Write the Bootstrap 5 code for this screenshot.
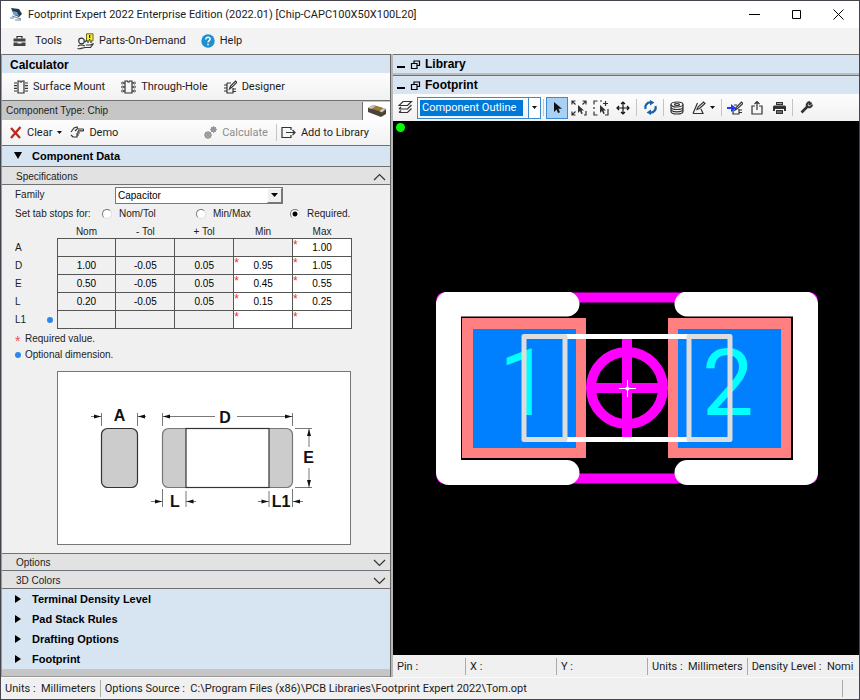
<!DOCTYPE html>
<html lang="en">
<head>
<meta charset="utf-8">
<meta name="viewport" content="width=device-width, initial-scale=1">
<title>Footprint Expert 2022 Enterprise Edition</title>
<link href="https://cdn.jsdelivr.net/npm/bootstrap@5.3.0/dist/css/bootstrap.min.css" rel="stylesheet">
<style>
  :root { --ui: Roboto, "Open Sans", sans-serif; --form: "Liberation Sans", Arial, sans-serif; --line: #707070; --head: #d7e4f2; }
  body { font-family: var(--ui); font-size: 11px; line-height: 16px; color: #1c1c1c; background: #f0f0f0; }
  svg { display: block; flex: none; fill: none; stroke: #333; stroke-width: 1.2; }
  .app { border: 1px solid #45454d; min-height: 100vh; }
  .titlebar { height: 27px; background: #fff; padding-left: 8px; }
  .titlebar h1 { font-size: 11px; line-height: 16px; font-weight: 400; }
  .btn { --bs-btn-padding-x: 0; --bs-btn-padding-y: 0; --bs-btn-font-size: 11px; --bs-btn-line-height: 16px; --bs-btn-border-radius: 0; --bs-btn-border-width: 0; --bs-btn-color: #1c1c1c; --bs-btn-disabled-color: #8c8c8c; --bs-btn-disabled-opacity: 1; display: inline-flex; align-items: center; gap: 5px; font-family: inherit; white-space: nowrap; }
  .win-btn { width: 42px; height: 26px; justify-content: center; }
  .menubar { height: 26px; background: #f3f3f3; padding-left: 12px; gap: 15px; }
  .pane-left { flex: 0 0 390px; min-width: 0; border-right: 1px solid #666; background: #f0f0f0; border-left: 1px solid #999; }
  .pane-right { border-left: 2px solid #b8b8b8; min-width: 0; }
  .pane-title { font-family: var(--form); font-weight: 700; font-size: 12px; line-height: 20px; height: 19px; background: var(--head); border-top: 1px solid var(--line); color: #000; margin: 0; }
  .tools { background: linear-gradient(#fdfdfd, #f1f1f1); }
  .mode-bar { height: 27px; }
  .action-bar { height: 25px; padding-right: 21px; }
  .pane-gap { height: 2px; background: #bdbdbd; }
  .form-font { font-family: var(--form); font-size: 10px; }
  .typebar { height: 20px; background: #c6c6c6; border-top: 1px solid var(--line); padding-left: 4px; }
  .typebar .chip-btn { background: #fff; border-left: 1px solid var(--line); width: 28px; height: 18px; justify-content: center; }
  .section-btn { width: 100%; background: var(--head); --bs-btn-font-size: 11px; font-family: var(--form); font-weight: 700; color: #000; gap: 10px; height: 20px; padding-left: 12px; --bs-btn-hover-bg: #c9daed; }
  .section-open { height: 22px; border-top: 1px solid var(--line); border-bottom: 1px solid var(--line); }
  .sub-btn { width: 100%; height: 18px; background: #e2e2e2; border-bottom: 1px solid var(--line); justify-content: space-between; padding: 2px 4px 0 14px; --bs-btn-font-size: 10px; font-family: var(--form); --bs-btn-hover-bg: #d8d8d8; }
  .spec { padding: 1px 14px 7px 13px; }
  .spec-row { height: 18px; }
  .spec-name { width: 100px; }
  .pick { position: relative; }
  .pick select { appearance: none; border: 1px solid #777; border-radius: 0; background: #fff; font: inherit; color: #000; padding: 0 18px 0 2px; height: 17px; width: 168px; }
  .pick .drop { position: absolute; right: 1px; top: 1px; bottom: 1px; width: 15px; background: #f0f0f0; border: 1px solid #fff; border-right-color: #777; border-bottom-color: #777; pointer-events: none; display: flex; align-items: center; justify-content: center; }
  .tab-row { height: 19px; padding-top: 1px; }
  .tab-label { width: 87px; }
  .tab-opt { width: 94px; gap: 7px; }
  .tab-opt:last-child { width: auto; }
  .tab-opt input { appearance: none; width: 10px; height: 10px; margin: 0; border-radius: 50%; background: #fff; border: 1px solid #777; border-right-color: #ddd; border-bottom-color: #ddd; }
  .tab-opt input:checked { background: radial-gradient(circle, #000 0 2px, #fff 3px); }
  .dims { width: 100%; table-layout: fixed; border-collapse: collapse; }
  .dims th { font-weight: 400; padding: 0; }
  .dims thead th { height: 15px; line-height: 13px; padding-top: 2px; text-align: center; }
  .dims thead th:first-child { width: 42px; }
  .dims td { border: 1px solid #555; padding: 0; height: 18px; position: relative; }
  .dims td input { display: block; width: 100%; height: 17px; border: 0; padding: 0; background: #f0f0f0; text-align: center; font: inherit; color: #000; border-radius: 0; }
  .dims .need input { background: #fff; }
  .dims .need::before { content: "*"; position: absolute; left: 0; top: 0; color: #e8303c; font-size: 12px; line-height: 12px; }
  .dot { width: 6px; height: 6px; border-radius: 50%; background: #2f86e8; display: inline-block; }
  .note { height: 16px; gap: 4px; }
  .notes { padding-top: 2px; }
  .note .star { color: #e8505c; font-size: 14px; line-height: 16px; height: 12px; width: 6px; }
  .figure-box { background: #fff; border: 1px solid #777; margin: 8px 25px 0 42px; }
  .figure-box svg, .board svg { width: 100%; height: auto; }
  .figure-box text { font-family: var(--form); font-weight: 700; font-size: 16px; fill: #111; stroke: none; text-anchor: middle; }
  .filler { background: #c6c6c6; border-bottom: 1px solid #999; min-height: 8px; }
  .tool-sep { width: 1px; height: 17px; background: #c4c4c4; flex: none; }
  .viewbar { height: 27px; padding-left: 5px; }
  .viewbar .tool-sep { margin: 0 2px; }
  .viewbar .btn { height: 22px; width: 22px; justify-content: center; }
  .viewbar .btn.on { background: #a9d1f5; border: 1px solid #3c8ad0; }
  .pick.layer select { width: 124px; height: 22px; border-color: #3c8ad0; padding: 2px 17px 2px 2px; background: #0078d7; background-clip: content-box; color: #fff; text-indent: 2px; }
  .pick.layer .drop { width: 12px; border: 0; border-left: 1px solid #3c8ad0; background: #fff; }
  .board { background: #000; position: relative; min-height: 200px; }
  .board svg { max-width: 384px; }
  .board text { font-family: Roboto, sans-serif; font-size: 92px; fill: #0ff; stroke: none; }
  .board .pin-dot { position: absolute; left: 3px; top: 2px; width: 9px; height: 9px; border-radius: 50%; background: #0f0; }
  .status { height: 22px; white-space: nowrap; overflow: hidden; }
  .status > div { border-right: 1px solid #aaa; height: 17px; line-height: 17px; padding: 0 4px; flex: none; }
  .status > .last { border: 0; }
  .w-pin { width: 73px; } .w-x { width: 91px; }
  .bottom { border-top: 1px solid #fafafa; }
</style>
<script src="https://cdn.jsdelivr.net/npm/bootstrap@5.3.0/dist/js/bootstrap.bundle.min.js"></script>
</head>
<body>
<div class="app d-flex flex-column">
  <header class="titlebar d-flex align-items-center">
    <svg width="15" height="15" viewBox="0 0 15 15" stroke="none"><path d="M2 1l8 1 3 5-3 3-5-2z" fill="#26384a" stroke="none"/><path d="M3 4l5 1 2 4-5-1z" fill="#6fa0c8" stroke="none"/><path d="M3 9l3 1 6 2M1 11l4 0M6 13l6 0" stroke="#6d8ba8"/></svg>
    <h1 class="mb-0 ms-1 flex-grow-1 text-nowrap">Footprint Expert 2022 Enterprise Edition (2022.01) [Chip-CAPC100X50X100L20]</h1>
    <button class="btn win-btn" aria-label="Minimize"><svg width="11" height="11" viewBox="0 0 11 11"><path d="M0 5.500h11" stroke="#000" stroke-width="1"/></svg></button>
    <button class="btn win-btn" aria-label="Maximize"><svg width="11" height="11" viewBox="0 0 11 11"><path d="M1.500 1.500h8v8h-8z" stroke="#000" stroke-width="1"/></svg></button>
    <button class="btn win-btn" aria-label="Close"><svg width="11" height="11" viewBox="0 0 11 11"><path d="M.5 .5l10 10M10.500 .5l-10 10" stroke="#000" stroke-width="1"/></svg></button>
  </header>

  <nav class="menubar d-flex align-items-center" aria-label="Main menu">
    <button class="btn"><svg class="me-1" width="13" height="12" viewBox="0 0 13 12"><path d="M4 3.500V1.500h5v2"/><path d="M.5 3.500h12v3H.5zM.5 7.500h4v1h4v-1h4v3.500H.5z" fill="#444" stroke="none"/></svg>Tools</button>
    <button class="btn"><svg width="17" height="17" viewBox="0 0 17 17"><circle cx="4.500" cy="8" r="2.800"/><path d="M.5 15.500c3 1 5-1 8-1h5l3-4-3 1.500H9M1 13c3-2 5-1 7 0"/><path d="M9.500 .8h6.500v7H9.500z" fill="#f7ee38" stroke="#6b6713" stroke-width="1"/><path d="M12.700 2v3M12.700 6v1" stroke="#222"/><path d="M8 9l2-2M11 10v-2M14 10v-2"/></svg>Parts-On-Demand</button>
    <button class="btn"><svg width="14" height="14" viewBox="0 0 14 14"><circle cx="7" cy="7" r="6.700" fill="#1e8fd0" stroke="none"/><path d="M4.800 5.400c0-3 4.500-2.800 4.300-.1C9 6.700 7 6.600 7 8.500M7 9.700v1.500" stroke="#fff" stroke-width="1.500"/></svg>Help</button>
  </nav>

  <main class="d-flex flex-grow-1">
    <section class="pane-left d-flex flex-column" aria-label="Calculator">
      <h2 class="pane-title ps-2">Calculator</h2>
      <div class="tools mode-bar d-flex align-items-center gap-3 ps-2">
        <button class="btn ps-1"><svg width="14" height="14" viewBox="0 0 14 14"><path d="M4 1h2c0 1.500 2 1.500 2 0h2v12H4zM0 3h3M0 5.700h3M0 8.300h3M0 11h3M11 3h3M11 5.700h3M11 8.300h3M11 11h3"/></svg>Surface Mount</button>
        <button class="btn"><svg width="15" height="14" viewBox="0 0 15 14"><path d="M4 1h2.500c0 1.500 2 1.500 2 0H11v12H4zM2 3h2M2 11h2M11 3h2M11 11h2M2 7h2M11 7h2"/><g stroke-width=".8"><circle cx="1.500" cy="3" r="1"/><circle cx="1.500" cy="7" r="1"/><circle cx="1.500" cy="11" r="1"/><circle cx="13.500" cy="3" r="1"/><circle cx="13.500" cy="7" r="1"/><circle cx="13.500" cy="11" r="1"/></g></svg>Through-Hole</button>
        <button class="btn"><svg width="13" height="14" viewBox="0 0 13 14"><path d="M3 3h4M3 3v10h6V8M0 5h3M0 8h3M0 11h3M9 9h3M9 11.500h3M5.500 9l1-3 5-5 1.300 1.300-5 5z"/></svg>Designer</button>
      </div>
      <div class="typebar form-font d-flex align-items-center justify-content-between">
        <span>Component Type: Chip</span>
        <button class="btn chip-btn" aria-label="Component image"><svg width="20" height="14" viewBox="0 0 20 14"><g stroke="none"><path d="M1 4l5-3 13 4v5l-5 3L1 8z" fill="#4a4438"/><path d="M1 4l5-3 3 1-4 3zM12 7l4-3 3 1-4 3.500z" fill="#c8c8c0"/><path d="M5 5l4-3 7 2-4 3z" fill="#a37b2c"/></g></svg></button>
      </div>
      <div class="tools action-bar d-flex align-items-center ps-1">
        <button class="btn ps-1"><svg width="12" height="13" viewBox="0 0 12 13"><path d="M1 2l9 10M10.500 1L1 12" stroke="#c02a1c" stroke-width="2.300"/></svg>Clear<svg width="5" height="3" viewBox="0 0 5 3"><path d="M0 0h5L2.500 3z" fill="#111" stroke="none"/></svg></button>
        <button class="btn ms-2"><svg width="14" height="13" viewBox="0 0 14 13"><path d="M1 6l3-4 3-1 1 2h5c.8 0 .8 1.800 0 1.800H8M8 5v2h2M7 7v2h2M7 9v2H3L1 9M5 5l2-2"/></svg>Demo</button>
        <button class="btn ms-auto" disabled><svg width="13" height="14" viewBox="0 0 13 14" stroke="#999"><g stroke="#999" stroke-width="2"><circle cx="4" cy="9" r="2.500"/><circle cx="9.500" cy="3.500" r="1.800"/></g><g stroke="#999" stroke-width="1"><path d="M4 5v8M0 9h8M1 6l6 6M7 6l-6 6M9.500 0v7M6 3.500h7M7 1l5 5M12 1L7 6"/></g></svg>Calculate</button>
        <span class="tool-sep ms-2 me-1"></span>
        <button class="btn"><svg width="15" height="13" viewBox="0 0 15 13"><path d="M10 4V1.500H1v10h9V9M5 6.500h9M11.500 4L14 6.500 11.500 9"/></svg>Add to Library</button>
      </div>
      <button class="btn section-btn section-open" aria-expanded="true"><svg width="8" height="8" viewBox="0 0 8 8"><path d="M0 0h8L4 7z" fill="#000" stroke="none"/></svg>Component Data</button>
      <button class="btn sub-btn" aria-expanded="true">Specifications<svg width="13" height="8" viewBox="0 0 13 8"><path d="M1 7l5.500-5.500L12 7"/></svg></button>

      <form class="spec form-font flex-grow-1">
        <div class="spec-row d-flex align-items-center">
          <label class="spec-name" for="family">Family</label>
          <div class="pick"><select id="family"><option>Capacitor</option></select><span class="drop"><svg width="7" height="4" viewBox="0 0 7 4"><path d="M0 0h7L3.500 4z" fill="#000" stroke="none"/></svg></span></div>
        </div>
        <div class="tab-row d-flex align-items-center" role="radiogroup" aria-labelledby="stops">
          <span class="tab-label" id="stops">Set tab stops for:</span>
          <label class="tab-opt d-flex align-items-center"><input type="radio" name="stop">Nom/Tol</label>
          <label class="tab-opt d-flex align-items-center"><input type="radio" name="stop">Min/Max</label>
          <label class="tab-opt d-flex align-items-center"><input type="radio" name="stop" checked>Required.</label>
        </div>
        <div class="pe-4">
        <table class="dims">
          <thead><tr><th></th><th>Nom</th><th>- Tol</th><th>+ Tol</th><th>Min</th><th>Max</th></tr></thead>
          <tbody>
            <tr><th>A</th><td><input aria-label="A nominal"></td><td><input aria-label="A minus tolerance"></td><td><input aria-label="A plus tolerance"></td><td><input aria-label="A minimum"></td><td class="need"><input aria-label="A maximum" value="1.00"></td></tr>
            <tr><th>D</th><td><input aria-label="D nominal" value="1.00"></td><td><input aria-label="D minus tolerance" value="-0.05"></td><td><input aria-label="D plus tolerance" value="0.05"></td><td class="need"><input aria-label="D minimum" value="0.95"></td><td class="need"><input aria-label="D maximum" value="1.05"></td></tr>
            <tr><th>E</th><td><input aria-label="E nominal" value="0.50"></td><td><input aria-label="E minus tolerance" value="-0.05"></td><td><input aria-label="E plus tolerance" value="0.05"></td><td class="need"><input aria-label="E minimum" value="0.45"></td><td class="need"><input aria-label="E maximum" value="0.55"></td></tr>
            <tr><th>L</th><td><input aria-label="L nominal" value="0.20"></td><td><input aria-label="L minus tolerance" value="-0.05"></td><td><input aria-label="L plus tolerance" value="0.05"></td><td class="need"><input aria-label="L minimum" value="0.15"></td><td class="need"><input aria-label="L maximum" value="0.25"></td></tr>
            <tr><th><span class="d-flex align-items-center justify-content-between pe-1">L1<span class="dot"></span></span></th><td><input aria-label="L1 nominal"></td><td><input aria-label="L1 minus tolerance"></td><td><input aria-label="L1 plus tolerance"></td><td class="need"><input aria-label="L1 minimum"></td><td class="need"><input aria-label="L1 maximum"></td></tr>
          </tbody>
        </table>
        </div>
        <div class="notes">
          <div class="note d-flex align-items-center"><span class="star">*</span>Required value.</div>
          <div class="note d-flex align-items-center"><span class="dot"></span>Optional dimension.</div>
        </div>
        <div class="figure-box">
          <svg viewBox="58 372 292 172" role="img" aria-label="Chip dimensions A, D, E, L and L1">
            <rect x="101.500" y="428.500" width="36" height="59" rx="6" fill="#ccc" stroke="#333"/>
            <rect x="162.500" y="428.500" width="130" height="59" rx="6" fill="#ccc" stroke="#777"/>
            <rect x="186" y="428.500" width="83" height="59" fill="#fff" stroke="#333"/>
            <g stroke="#555" stroke-width=".8"><path d="M101.500 413v13M137.500 413v13M162.500 413v13M292.500 413v13M295 428.500h17M295 487.500h17M162.500 489v18M186 491v16M269 491v16M292.500 489v18M91 416.500h10M138 416.500h8M163 416.500h52M237 416.500h56M309 429v18M309 468v20M151 501.500h11M186 501.500h10M258 501.500h11M293 501.500h10"/></g>
            <path d="M101 416.500l-7-2v4zM138 416.500l7-2v4zM163 416.500l7-2v4zM292 416.500l-7-2v4zM309 429l-2 7h4zM309 487l-2-7h4zM162 501.500l-7-2v4zM186.500 501.500l7-2v4zM268.500 501.500l-7-2v4zM293 501.500l7-2v4z" fill="#111" stroke="none"/>
            <text x="119.500" y="421">A</text><text x="225" y="423">D</text><text x="308.500" y="463">E</text><text x="175" y="507">L</text><text x="281" y="507">L1</text>
          </svg>
        </div>
      </form>

      <button class="btn sub-btn border-top border-secondary" aria-expanded="false">Options<svg width="13" height="8" viewBox="0 0 13 8"><path d="M1 1l5.500 5.500L12 1"/></svg></button>
      <button class="btn sub-btn" aria-expanded="false">3D Colors<svg width="13" height="8" viewBox="0 0 13 8"><path d="M1 1l5.500 5.500L12 1"/></svg></button>
      <button class="btn section-btn" aria-expanded="false"><svg width="8" height="8" viewBox="0 0 8 8"><path d="M1 0l6 4-6 4z" fill="#000" stroke="none"/></svg>Terminal Density Level</button>
      <button class="btn section-btn" aria-expanded="false"><svg width="8" height="8" viewBox="0 0 8 8"><path d="M1 0l6 4-6 4z" fill="#000" stroke="none"/></svg>Pad Stack Rules</button>
      <button class="btn section-btn" aria-expanded="false"><svg width="8" height="8" viewBox="0 0 8 8"><path d="M1 0l6 4-6 4z" fill="#000" stroke="none"/></svg>Drafting Options</button>
      <button class="btn section-btn" aria-expanded="false"><svg width="8" height="8" viewBox="0 0 8 8"><path d="M1 0l6 4-6 4z" fill="#000" stroke="none"/></svg>Footprint</button>
      <div class="filler"></div>
    </section>

    <section class="pane-right d-flex flex-column flex-grow-1" aria-label="Footprint view">
      <h2 class="pane-title d-flex align-items-center ps-1"><svg class="me-1" width="9" height="9" viewBox="0 0 9 9"><path d="M0 7h8" stroke="#000" stroke-width="2"/></svg><svg class="me-1" width="11" height="9" viewBox="-1 0 11 9"><path d="M3 3V1h5.500v4.500H6M.5 3.500H6v5H.5z" stroke="#000"/></svg>Library</h2>
      <div class="pane-gap"></div>
      <h2 class="pane-title d-flex align-items-center ps-1"><svg class="me-1" width="9" height="9" viewBox="0 0 9 9"><path d="M0 7h8" stroke="#000" stroke-width="2"/></svg><svg class="me-1" width="11" height="9" viewBox="-1 0 11 9"><path d="M3 3V1h5.500v4.500H6M.5 3.500H6v5H.5z" stroke="#000"/></svg>Footprint</h2>
      <div class="viewbar tools d-flex align-items-center">
        <svg class="me-1" width="15" height="15" viewBox="0 0 15 15"><path d="M5 1.500h8.500l-4 4H1zM1 9h8.500l4-4M1 12.500h8.500l4-4M1 9l2-2M1 12.500l2-2"/></svg>
        <div class="pick layer"><select aria-label="Layer"><option>Component Outline</option></select><span class="drop"><svg width="5" height="3" viewBox="0 0 5 3"><path d="M0 0h5L2.500 3z" fill="#111" stroke="none"/></svg></span></div>
        <span class="tool-sep"></span>
        <button class="btn on" aria-label="Select"><svg width="9" height="14" viewBox="0 0 9 14"><path d="M1 1v10l2.500-2.500L5 12l2-.8-1.600-3.400H9z" fill="#111" stroke="none"/></svg></button>
        <button class="btn" aria-label="Zoom to fit"><svg width="16" height="16" viewBox="0 0 16 16"><path d="M1 4.500V1h3.500M1 1l3.500 3.500M11.500 1H15v3.500M15 1l-3.500 3.500M1 11.500V15h3.500M1 15l3.500-3.500M15 11v4h-2"/><path d="M7 5v8l2-2 1.300 3 1.500-.6-1.300-2.800H13z" fill="#333" stroke="none"/></svg></button>
        <button class="btn" aria-label="Zoom to area"><svg width="16" height="16" viewBox="0 0 16 16"><path d="M1 4.500V1h3.500M7 1h2M1 7v2M1 11.500V15h3.500M10 3.500h5M12.500 1v5M15 9v6h-3"/><path d="M7 5v8l2-2 1.300 3 1.500-.6-1.300-2.800H13z" fill="#333" stroke="none"/></svg></button>
        <button class="btn" aria-label="Pan"><svg width="14" height="14" viewBox="0 0 14 14"><path d="M7 1v12M1 7h12M5 3l2-2 2 2M5 11l2 2 2-2M3 5L1 7l2 2M11 5l2 2-2 2" stroke="#111"/></svg></button>
        <span class="tool-sep"></span>
        <button class="btn" aria-label="Refresh"><svg width="15" height="15" viewBox="0 0 15 15"><path d="M2.500 9A5 5 0 0 1 8 2.500M12.500 6A5 5 0 0 1 7 12.500" stroke="#1a62a8" stroke-width="2.300"/><path d="M7 0l4.500 2.500L7 5.500zM8 15l-4.500-2.500L8 9.500z" fill="#1a62a8" stroke="none"/></svg></button>
        <span class="tool-sep"></span>
        <button class="btn" aria-label="Layers"><svg width="14" height="14" viewBox="0 0 14 14"><ellipse cx="7" cy="3.500" rx="6" ry="2.500"/><ellipse cx="7" cy="3.500" rx="2.500" ry="1"/><path d="M1 3.500v7c0 3.300 12 3.300 12 0v-7M1 6c0 3.300 12 3.300 12 0M1 8.300c0 3.300 12 3.300 12 0"/></svg></button>
        <button class="btn" aria-label="Draw"><svg width="14" height="14" viewBox="0 0 14 14"><path d="M1 12.500L5.500 2M1 12.500h10L9 8M5 8.500l1-2.500 5.500-5L13 2.500l-5.500 5z"/></svg></button>
        <svg class="me-1" width="5" height="3" viewBox="0 0 5 3"><path d="M0 0h5L2.500 3z" fill="#111" stroke="none"/></svg>
        <span class="tool-sep"></span>
        <button class="btn" aria-label="Edit footprint"><svg width="16" height="14" viewBox="0 0 16 14"><path d="M7 4h3M6 5v8h6V8M12 9h3M12 11.500h3M8 9l1-2.500 5.500-5.500L16 2.500l-5.500 5z"/><path d="M0 6h4V3l5 4-5 4V8H0z" fill="#1c3dff" stroke="none"/></svg></button>
        <button class="btn" aria-label="Export"><svg width="12" height="15" viewBox="0 0 12 15"><path d="M4 6H1v8h10V6H8M6 10V1.500M3.500 4L6 1.500 8.500 4"/></svg></button>
        <button class="btn" aria-label="Print"><svg width="13" height="12" viewBox="0 0 13 12"><path d="M3 0h7v3H3zM1 3.500h11l1 1V9h-2V7H2v2H0V4.500zM3 8h7v4H3z" fill="#333" stroke="none"/><path d="M4 1.500h5M4 10h5" stroke="#aaa"/></svg></button>
        <span class="tool-sep"></span>
        <button class="btn" aria-label="Settings"><svg width="13" height="13" viewBox="0 0 13 13"><path d="M1.500 11.500L8 5" stroke-width="2.600"/><path d="M11.500 1.500L9.500 3.500l-1-.2M12 3.500c0 3-4 3.500-5 2-1-2 .5-4.500 3-4.500" stroke-width="2"/></svg></button>
      </div>
      <div class="board flex-grow-1 d-flex align-items-center justify-content-center">
        <span class="pin-dot"></span>
        <svg viewBox="434 292 384 193" role="img" aria-label="Chip footprint with pads 1 and 2">
          <rect x="441.500" y="297.500" width="371" height="181" rx="2" stroke="#f0f" stroke-width="10"/>
          <path d="M567 304H448.500v168.500H567M687 304h118.500v168.500H687" stroke="#fff" stroke-width="25" stroke-linecap="round" stroke-linejoin="round"/>
          <g stroke="none"><path d="M462 318h124v140H462zM668 318h123v140H668z" fill="#ff8080"/><path d="M473 329h103v119H473zM678 329h103v119H678z" fill="#007fff"/></g>
          <text x="499" y="415">1</text><text x="702" y="415">2</text>
          <g stroke="#f0f" stroke-width="10"><circle cx="627" cy="388" r="36"/><path d="M627 338v100M591 388h72"/></g>
          <g stroke-width="5" stroke-linejoin="round"><path d="M565 336.500h124M565 439.500h124" stroke="#fff"/><path d="M524 336.500h41v103h-41zM689 336.500h41v103h-41z" stroke="#ddd"/></g>
          <path d="M619 388.500h17M627.500 380v17" stroke="#fff" stroke-width="1"/><circle cx="627.500" cy="388.500" r="2" fill="#fff" stroke="none"/>
        </svg>
      </div>
      <div class="status d-flex align-items-center">
        <div class="w-pin">Pin :</div><div class="w-x">X :</div><div class="w-x">Y :</div>
        <div>Units :&nbsp; Millimeters</div>
        <div class="last">Density Level :&nbsp; Nomi</div>
      </div>
    </section>
  </main>

  <footer class="status bottom d-flex align-items-center">
    <div>Units :&nbsp; Millimeters</div>
    <div class="flex-fill me-3">Options Source :&nbsp; C:\Program Files (x86)\PCB Libraries\Footprint Expert 2022\Tom.opt</div>
  </footer>
</div>
</body>
</html>
